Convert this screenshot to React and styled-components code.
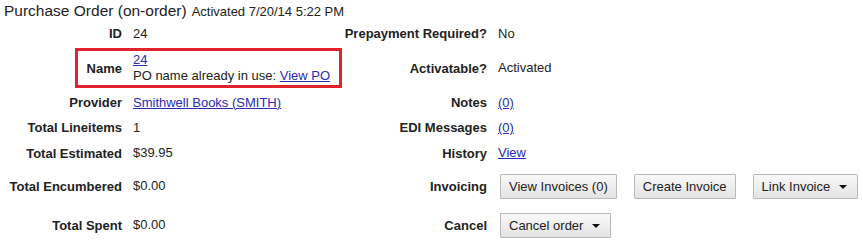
import { createGlobalStyle, styled } from 'styled-components';

const GlobalStyle = createGlobalStyle`
  body {
    margin: 0;
    background: #ffffff;
    font-family: "Liberation Sans", Arial, sans-serif;
    font-size: 13px;
    color: #222222;
  }
`;

const Page = styled.div`
  width: 863px;
`;

const Header = styled.div`
  height: 21px;
  padding-left: 4px;
  display: flex;
  align-items: baseline;
  gap: 5px;
  line-height: 21px;
`;

const Title = styled.span`
  font-size: 15.5px;
  color: #222;
`;

const Status = styled.span`
  font-size: 13px;
  color: #222;
`;

const Row = styled.div`
  display: flex;
  align-items: center;
  height: ${(p) => p.$h}px;
`;

const Label = styled.div`
  width: ${(p) => p.$w || 128}px;
  box-sizing: border-box;
  padding-right: 6px;
  text-align: right;
  font-weight: bold;
  white-space: nowrap;
  flex-shrink: 0;
`;

const Value = styled.div`
  width: ${(p) => (p.$w ? `${p.$w}px` : 'auto')};
  flex: ${(p) => (p.$w ? '0 0 auto' : '1')};
  box-sizing: border-box;
  padding-left: 5px;
  line-height: 16px;
  white-space: nowrap;
  display: flex;
  align-items: center;
  gap: 17px;
`;

const Stack = styled.div`
  display: flex;
  flex-direction: column;
`;

const Highlight = styled.div`
  margin-left: 75px;
  width: 267px;
  height: 40px;
  box-sizing: border-box;
  border: 3px solid #e0232d;
  display: flex;
  align-items: center;
  flex-shrink: 0;
`;

const Link = styled.a`
  color: #2b2bb3;
  text-decoration: underline;
  cursor: pointer;
`;

const Button = styled.button`
  height: 25px;
  margin-left: 2px;
  padding: 0 ${(p) => (p.$menu ? 10 : 8)}px 0 8px;
  border: 1px solid #b9b9b9;
  border-radius: 1px;
  background: linear-gradient(#f9f9f9, #e3e3e3);
  font-family: "Liberation Sans", Arial, sans-serif;
  font-size: 13px;
  color: #222;
  display: flex;
  align-items: center;
  gap: 9px;
  & + & {
    margin-left: 0;
  }
`;

const Caret = styled.span`
  width: 0;
  height: 0;
  border-left: 4px solid transparent;
  border-right: 4px solid transparent;
  border-top: 4px solid #111;
  margin-top: 1px;
`;

function App() {
  return (
    <Page>
      <GlobalStyle />
      <Header>
        <Title>Purchase Order (on-order)</Title>
        <Status>Activated 7/20/14 5:22 PM</Status>
      </Header>

      <Row $h={25}>
        <Label>ID</Label>
        <Value $w={214}>24</Value>
        <Label $w={151}>Prepayment Required?</Label>
        <Value>No</Value>
      </Row>

      <Row $h={44}>
        <Highlight>
          <Label $w={50}>Name</Label>
          <Value>
            <Stack>
              <span><Link>24</Link></span>
              <span>PO name already in use: <Link>View PO</Link></span>
            </Stack>
          </Value>
        </Highlight>
        <Label $w={151}>Activatable?</Label>
        <Value>Activated</Value>
      </Row>

      <Row $h={25}>
        <Label>Provider</Label>
        <Value $w={214}><Link>Smithwell Books (SMITH)</Link></Value>
        <Label $w={151}>Notes</Label>
        <Value><Link>(0)</Link></Value>
      </Row>

      <Row $h={25}>
        <Label>Total Lineitems</Label>
        <Value $w={214}>1</Value>
        <Label $w={151}>EDI Messages</Label>
        <Value><Link>(0)</Link></Value>
      </Row>

      <Row $h={26}>
        <Label>Total Estimated</Label>
        <Value $w={214}>$39.95</Value>
        <Label $w={151}>History</Label>
        <Value><Link>View</Link></Value>
      </Row>

      <Row $h={40}>
        <Label>Total Encumbered</Label>
        <Value $w={214}>$0.00</Value>
        <Label $w={151}>Invoicing</Label>
        <Value>
          <Button>View Invoices (0)</Button>
          <Button>Create Invoice</Button>
          <Button $menu>Link Invoice <Caret /></Button>
        </Value>
      </Row>

      <Row $h={38}>
        <Label>Total Spent</Label>
        <Value $w={214}>$0.00</Value>
        <Label $w={151}>Cancel</Label>
        <Value>
          <Button $menu>Cancel order <Caret /></Button>
        </Value>
      </Row>
    </Page>
  );
}

export default App;
